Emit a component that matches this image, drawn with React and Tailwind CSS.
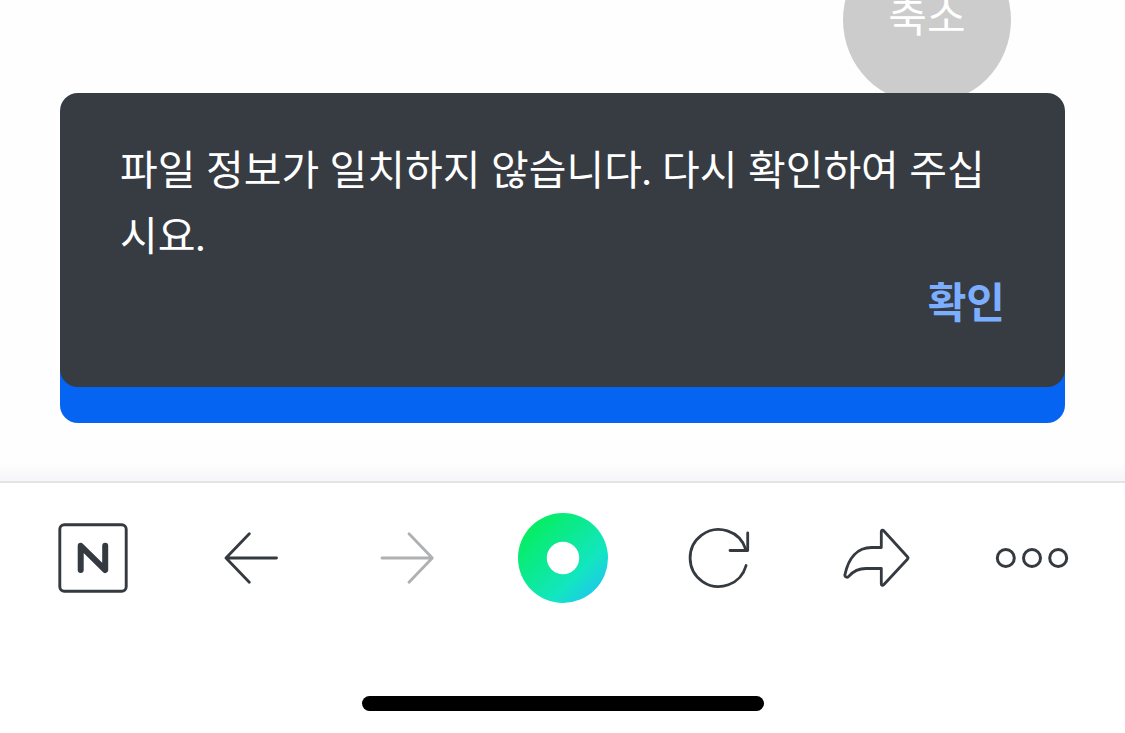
import React from 'react';

function ToolButton({ label, viewBox, disabled = false, children }) {
  return (
    <button type="button" aria-label={label} disabled={disabled} className="size-24 shrink-0">
      <svg
        viewBox={viewBox}
        className={disabled ? 'size-full text-[#afb0b2]' : 'size-full text-[#343a40]'}
        fill="none"
        stroke="currentColor"
        strokeWidth="3"
        strokeLinecap="round"
        strokeLinejoin="round"
        aria-hidden="true"
      >
        {children}
      </svg>
    </button>
  );
}

function Toast() {
  return (
    <div
      role="alertdialog"
      aria-labelledby="toast-message"
      className="absolute inset-x-0 bottom-9 rounded-[18px] bg-[#373b42] px-15 pt-11 pb-13 leading-[66px]"
    >
      <p id="toast-message" className="text-[41px] leading-[66px] break-all text-white">
        파일 정보가 일치하지 않습니다. 다시 확인하여 주십시요.
      </p>
      <div className="flex justify-end">
        <button type="button" className="text-[42px] leading-[66px] font-bold text-[#7baeff]">확인</button>
      </div>
    </div>
  );
}

export default function App() {
  return (
    <div className="flex min-h-screen flex-col overflow-hidden bg-white font-['Lato','Noto_Sans_CJK_KR',sans-serif]">
      <main className="flex flex-col bg-[#fefefe]">
        <div className="flex justify-end pr-[114px]">
          <button
            type="button"
            className="-mt-16 flex size-42 items-center justify-center rounded-full bg-[#cccccc] pb-2 text-[42px] text-white"
          >
            축소
          </button>
        </div>
        <div className="relative mx-15 mt-[163px]">
          <button type="button" aria-label="다음" className="block h-39 w-full rounded-[18px] bg-[#0664f2]" />
          <Toast />
        </div>
        <div className="mt-10 h-[18px] bg-linear-to-b from-[#fefefe] to-[#f5f6f8]" />
      </main>

      <nav className="flex items-center justify-between border-t-2 border-[#e3e4e6] bg-white px-[45px] pt-[27px] pb-[26px]">
        <ToolButton label="홈" viewBox="45 510 96 96">
          <rect x="59.8" y="524.8" width="66.400" height="66.400" rx="4.5" strokeWidth="2.9" />
          <path d="M80.7 570V545.8L105.2 570V545.8" strokeWidth="6" />
        </ToolButton>
        <ToolButton label="뒤로" viewBox="202 510 96 96">
          <path d="M276.500 558H226M249.300 533.700L226 558L249.300 582.300" strokeWidth="2.8" />
        </ToolButton>
        <ToolButton label="앞으로" viewBox="358 510 96 96" disabled>
          <path d="M382 558H432M409 533.700L432.300 558L409 582.300" strokeWidth="2.8" />
        </ToolButton>
        <ToolButton label="그린닷" viewBox="515 510 96 96">
          <defs>
            <linearGradient id="dot" x1="0.15" y1="0.15" x2="0.9" y2="0.9">
              <stop offset="0" stopColor="#06ed63" />
              <stop offset="0.7" stopColor="#12e6c0" />
              <stop offset="1" stopColor="#20c6ee" />
            </linearGradient>
          </defs>
          <circle cx="563" cy="558" r="45" fill="url(#dot)" stroke="none" />
          <circle cx="563" cy="558" r="16.200" fill="#fff" stroke="none" />
        </ToolButton>
        <ToolButton label="새로고침" viewBox="671 510 96 96">
          <path d="M746.100 565.500A28.500 28.500 0 1 1 745.800 549.500" strokeWidth="2.8" />
          <path d="M747.700 533V550.500H730" strokeWidth="2.8" />
        </ToolButton>
        <ToolButton label="공유" viewBox="828 510 96 96">
          <path
            d="M881.300 547.500V531.500C881.300 530 882.800 529.800 883.700 530.800L907.400 556.700Q908.600 558 907.400 559.300L883.700 584.700C882.800 585.800 881.300 585.500 881.300 584V568.500H866C858 568.500 853 571.500 849 576.200C847.300 578.200 844.300 577 845 574.500C848.500 558 857.500 547.500 871.500 547.500Z"
            strokeWidth="2.8"
          />
        </ToolButton>
        <ToolButton label="더보기" viewBox="984 510 96 96">
          <circle cx="1005.800" cy="558" r="8.500" />
          <circle cx="1032" cy="558" r="8.500" />
          <circle cx="1058.200" cy="558" r="8.500" />
        </ToolButton>
      </nav>

      <footer className="flex justify-center pt-[64px] pb-[22px]">
        <div className="h-[15px] w-[402px] rounded-full bg-black" />
      </footer>
    </div>
  );
}
